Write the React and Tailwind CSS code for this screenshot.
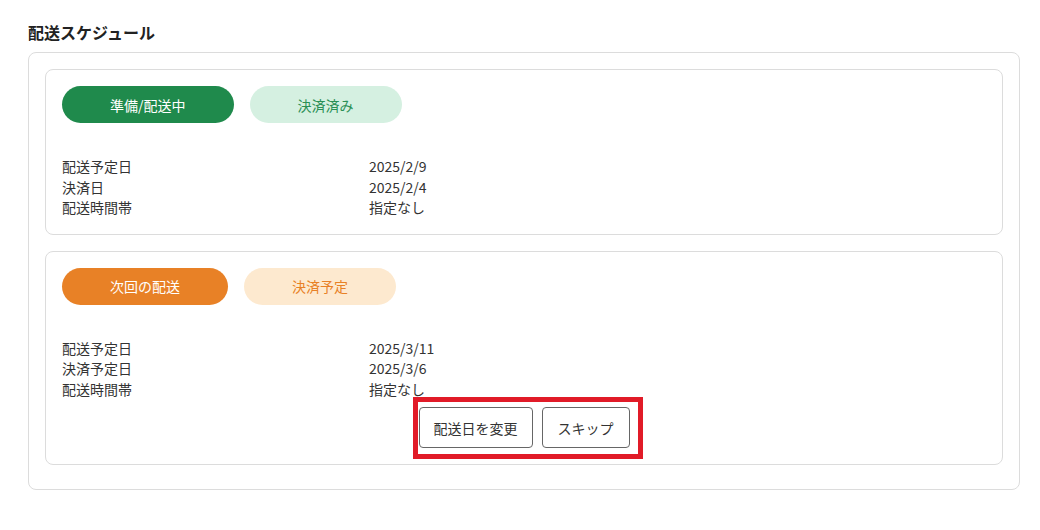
export default function App() {
  const font = { fontFamily: '"Noto Sans CJK JP", "Noto Sans", sans-serif' };
  const Row = ({ label, value }) => (
    <div className="flex leading-[20.5px]">
      <div className="w-[307px] shrink-0">{label}</div>
      <div>{value}</div>
    </div>
  );
  return (
    <div className="w-[1040px] h-[530px] bg-white text-[#333] pt-[22px] pl-[28px]" style={font}>
      <h2 className="text-[16px] font-bold leading-[20px] text-[#222] mb-[10px]">配送スケジュール</h2>
      <div className="w-[992px] border border-[#dcdcdc] rounded-lg px-4 pt-4 pb-6 flex flex-col gap-4">
        <div className="border border-[#dcdcdc] rounded-lg p-4 text-[14px]">
          <div className="flex gap-4">
            <span className="h-[37px] px-12 rounded-full bg-[#1f8a4c] text-white flex items-center leading-none">準備/配送中</span>
            <span className="h-[37px] px-12 rounded-full bg-[#d5f0e1] text-[#2a8f55] flex items-center leading-none">決済済み</span>
          </div>
          <div className="mt-[33px]">
            <Row label="配送予定日" value="2025/2/9" />
            <Row label="決済日" value="2025/2/4" />
            <Row label="配送時間帯" value="指定なし" />
          </div>
        </div>
        <div className="border border-[#dcdcdc] rounded-lg p-4 text-[14px]">
          <div className="flex gap-4">
            <span className="h-[37px] px-12 rounded-full bg-[#e88126] text-white flex items-center leading-none">次回の配送</span>
            <span className="h-[37px] px-12 rounded-full bg-[#fde9cf] text-[#e88126] flex items-center leading-none">決済予定</span>
          </div>
          <div className="mt-[33px]">
            <Row label="配送予定日" value="2025/3/11" />
            <Row label="決済予定日" value="2025/3/6" />
            <Row label="配送時間帯" value="指定なし" />
          </div>
          <div className="flex justify-center mt-2">
            <div className="relative flex gap-[9px]">
              <button className="h-[41px] px-[14px] border border-[#666] rounded-[4px] bg-white text-[#333] leading-none">配送日を変更</button>
              <button className="h-[41px] px-[15px] border border-[#666] rounded-[4px] bg-white text-[#333] leading-none">スキップ</button>
              <div className="absolute left-[-6px] right-[-13px] top-[-10px] bottom-[-11px] border-[5px] border-[#e11b28] pointer-events-none"></div>
            </div>
          </div>
        </div>
      </div>
    </div>
  );
}
